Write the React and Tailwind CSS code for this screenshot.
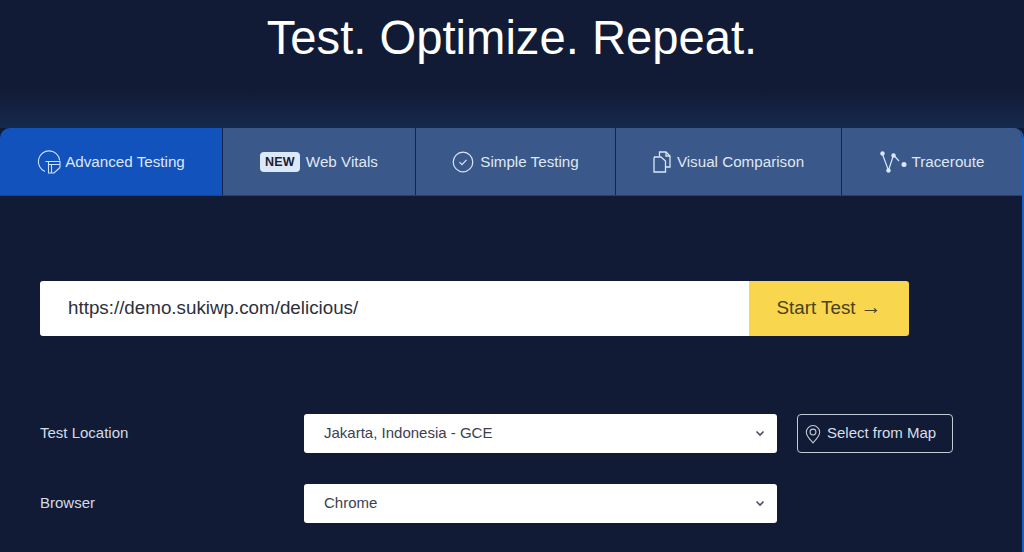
import React from 'react';

const AdvancedIcon = () => (
  <svg width="24" height="24" viewBox="0 0 24 24" fill="none" stroke="currentColor" strokeWidth="1.100" className="text-[#cfe0fa] shrink-0">
    <path d="M8 21.500A10.700 10.700 0 1 1 22.700 10.500" />
    <path d="M8.500 11.500h14.500v6M11.500 14.500h11.500M11.500 11.500v11.500h5.500l6-5.500M14.500 14.500v8.500" />
  </svg>
);

const CheckIcon = () => (
  <svg width="22" height="22" viewBox="0 0 22 22" fill="none" stroke="currentColor" strokeWidth="1.200" className="text-[#dbe6f7] shrink-0">
    <circle cx="11" cy="11" r="9.800" />
    <path d="M7.500 11.200l2.500 2.500 4.500-4.800" />
  </svg>
);

const PagesIcon = () => (
  <svg width="18" height="22" viewBox="0 0 18 22" fill="none" stroke="currentColor" strokeWidth="1.300" className="text-[#dbe6f7] shrink-0">
    <path d="M6.500 5.500V1h6.500l4 4v11h-4.500" />
    <path d="M1 7.500L1.500 6h6.500l4.500 4v11H1z" />
    <path d="M13 1v4h4" />
  </svg>
);

const RouteIcon = () => (
  <svg width="28" height="22" viewBox="0 0 28 22" fill="none" className="text-[#dbe6f7] shrink-0">
    <path d="M2 2l6.500 17.500L13.500 4l5.500 6" stroke="currentColor" strokeWidth="1.200" />
    <g fill="currentColor">
      <circle cx="2.500" cy="2.500" r="2.200" />
      <circle cx="8.500" cy="19.500" r="2.200" />
      <circle cx="13.500" cy="4.500" r="2.200" />
      <circle cx="24" cy="13.500" r="2.500" />
    </g>
  </svg>
);

const PinIcon = () => (
  <svg width="16" height="22" viewBox="0 0 18 22" fill="none" stroke="currentColor" strokeWidth="1.200" className="text-[#c3cad8] shrink-0">
    <path d="M9 21c-3-3.500-7.500-7.500-7.500-12a7.500 7.500 0 0 1 15 0c0 4.500-4.500 8.500-7.500 12z" />
    <circle cx="9" cy="8.800" r="3.300" />
  </svg>
);

const Chevron = () => (
  <svg width="10" height="7" viewBox="0 0 10 7" fill="none" stroke="#4b5160" strokeWidth="1.600">
    <path d="M1.500 1.500L5 5l3.500-3.500" />
  </svg>
);

function Tab({ width, active, children }) {
  return (
    <div className={`${width} h-full pt-[1px] flex items-center justify-center gap-[4px] text-[#dfe7f5] text-[15.200px] ${active ? 'bg-[#1252bd]' : 'bg-[#3a5889]'}`}>
      {children}
    </div>
  );
}

function Select({ value }) {
  return (
    <div className="w-[473px] h-[39px] bg-white rounded-[3px] flex items-center justify-between pl-[20px] pr-[12px] text-[15px] text-[#3b4150]">
      <span>{value}</span>
      <Chevron />
    </div>
  );
}

export default function App() {
  return (
    <div className="w-[1024px] h-[552px] overflow-hidden bg-[#111b35] font-['Liberation_Sans',Arial,sans-serif]">
      <div className="h-[128px] pt-[10px] text-center bg-gradient-to-b from-[#111b35] from-70% to-[#15294f]">
        <h1 className="text-[47.200px] leading-[56px] text-white">Test. Optimize. Repeat.</h1>
      </div>

      <div className="h-[424px] rounded-t-[10px] overflow-hidden border-r-2 border-[#1a5fc4]">
        <div className="h-[68px] flex gap-px bg-[#14264d] border-b border-[#2a4066]">
          <Tab width="w-[222px]" active>
            <AdvancedIcon />
            <span>Advanced Testing</span>
          </Tab>
          <Tab width="w-[192px]">
            <span className="h-[20px] px-[5px] mr-[2px] rounded-[4px] bg-[#dce9fb] text-[#1b2233] text-[12.500px] font-bold leading-[20px] tracking-[0.2px]">NEW</span>
            <span>Web Vitals</span>
          </Tab>
          <Tab width="w-[199px]">
            <CheckIcon />
            <span className="ml-[2px]">Simple Testing</span>
          </Tab>
          <Tab width="w-[225px]">
            <PagesIcon />
            <span className="ml-[2px]">Visual Comparison</span>
          </Tab>
          <Tab width="flex-1">
            <RouteIcon />
            <span>Traceroute</span>
          </Tab>
        </div>

        <div className="pl-[40px] pt-[85px]">
          <div className="w-[869px] h-[55px] flex rounded-[3px] overflow-hidden">
            <div className="flex-1 bg-white flex items-center pl-[28px] text-[18.800px] text-[#2b303c]">
              https://demo.sukiwp.com/delicious/
            </div>
            <div className="w-[160px] bg-[#f8d64e] flex items-center justify-center gap-[5px] text-[18.800px] text-[#4a4220]">
              <span>Start Test</span>
              <span className="text-[21px] leading-none -translate-y-[2px]">→</span>
            </div>
          </div>

          <div className="mt-[78px] flex flex-col gap-[31px]">
            <div className="flex items-center">
              <div className="w-[264px] text-[15px] text-[#d5dbe6]">Test Location</div>
              <Select value="Jakarta, Indonesia - GCE" />
              <div className="ml-[20px] w-[156px] h-[39px] border border-[#c3cad8] rounded-[4px] flex items-center pl-[7px] gap-[6px] text-[15px] text-[#d8dee9]">
                <PinIcon />
                <span>Select from Map</span>
              </div>
            </div>
            <div className="flex items-center">
              <div className="w-[264px] text-[15px] text-[#d5dbe6]">Browser</div>
              <Select value="Chrome" />
            </div>
          </div>
        </div>
      </div>
    </div>
  );
}
